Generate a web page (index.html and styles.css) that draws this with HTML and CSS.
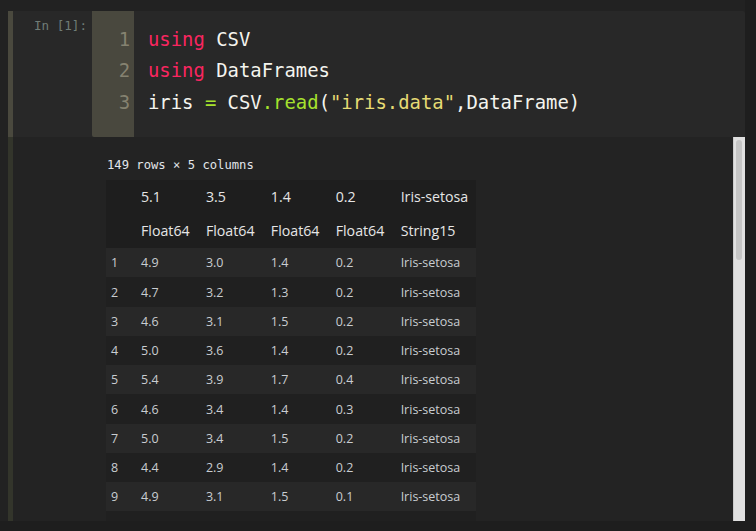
FILE: index.html
```html
<!DOCTYPE html>
<html>
<head>
<meta charset="utf-8">
<link rel="stylesheet" href="styles.css">
</head>
<body>
<div class="notebook">
  <div class="cell">
    <div class="input">
      <div class="prompt">In [1]:</div>
      <div class="gutter"><div>1</div><div>2</div><div>3</div></div>
      <div class="code">
        <div class="line"><span class="kw">using</span> CSV</div>
        <div class="line"><span class="kw">using</span> DataFrames</div>
        <div class="line">iris <span class="op">=</span> CSV<span class="fn">.read</span>(<span class="str">"iris.data"</span>,DataFrame)</div>
      </div>
    </div>
    <div class="output">
      <div class="scroll">
        <div class="result">
          <p class="dims">149 rows × 5 columns</p>
          <table class="df">
            <thead>
              <tr class="names"><th class="idx"></th><th>5.1</th><th>3.5</th><th>1.4</th><th>0.2</th><th>Iris-setosa</th></tr>
              <tr class="types"><th class="idx"></th><th>Float64</th><th>Float64</th><th>Float64</th><th>Float64</th><th>String15</th></tr>
            </thead>
            <tbody>
              <tr><td class="idx">1</td><td>4.9</td><td>3.0</td><td>1.4</td><td>0.2</td><td>Iris-setosa</td></tr>
              <tr><td class="idx">2</td><td>4.7</td><td>3.2</td><td>1.3</td><td>0.2</td><td>Iris-setosa</td></tr>
              <tr><td class="idx">3</td><td>4.6</td><td>3.1</td><td>1.5</td><td>0.2</td><td>Iris-setosa</td></tr>
              <tr><td class="idx">4</td><td>5.0</td><td>3.6</td><td>1.4</td><td>0.2</td><td>Iris-setosa</td></tr>
              <tr><td class="idx">5</td><td>5.4</td><td>3.9</td><td>1.7</td><td>0.4</td><td>Iris-setosa</td></tr>
              <tr><td class="idx">6</td><td>4.6</td><td>3.4</td><td>1.4</td><td>0.3</td><td>Iris-setosa</td></tr>
              <tr><td class="idx">7</td><td>5.0</td><td>3.4</td><td>1.5</td><td>0.2</td><td>Iris-setosa</td></tr>
              <tr><td class="idx">8</td><td>4.4</td><td>2.9</td><td>1.4</td><td>0.2</td><td>Iris-setosa</td></tr>
              <tr><td class="idx">9</td><td>4.9</td><td>3.1</td><td>1.5</td><td>0.1</td><td>Iris-setosa</td></tr>
              <tr><td class="idx">10</td><td>5.4</td><td>3.7</td><td>1.5</td><td>0.2</td><td>Iris-setosa</td></tr>
              <tr><td class="idx">11</td><td>4.8</td><td>3.4</td><td>1.6</td><td>0.2</td><td>Iris-setosa</td></tr>
              <tr><td class="idx">12</td><td>4.8</td><td>3.0</td><td>1.4</td><td>0.1</td><td>Iris-setosa</td></tr>
              <tr><td class="idx">13</td><td>4.3</td><td>3.0</td><td>1.1</td><td>0.1</td><td>Iris-setosa</td></tr>
              <tr><td class="idx">14</td><td>5.8</td><td>4.0</td><td>1.2</td><td>0.2</td><td>Iris-setosa</td></tr>
              <tr><td class="idx">15</td><td>5.7</td><td>4.4</td><td>1.5</td><td>0.4</td><td>Iris-setosa</td></tr>
            </tbody>
          </table>
        </div>
      </div>
      <div class="vscroll"><div class="thumb"></div></div>
    </div>
  </div>
</div>
</body>
</html>
```

FILE: styles.css
```css
html, body {
  margin: 0;
  padding: 0;
  background: #1e1e1e;
  overflow: hidden;
}

.notebook {
  width: 745px;
  height: 521px;
  box-sizing: border-box;
  padding: 11px 0 0 8px;
  background: #222222;
}

.cell {
  display: flex;
  flex-direction: column;
}

.input {
  display: flex;
  height: 126px;
  background: #282828;
  border-left: 5px solid #4a493e;
  border-top-right-radius: 2px;
}

.prompt {
  width: 74px;
  padding: 7px 5px 0 0;
  text-align: right;
  font-family: "DejaVu Sans Mono", monospace;
  font-size: 12.6px;
  line-height: 15px;
  color: #707c76;
}

.gutter {
  width: 38px;
  padding: 12.5px 4px 0 0;
  background: #49483e;
  border-bottom-left-radius: 2px;
  text-align: right;
  font-family: "DejaVu Sans Mono", monospace;
  font-size: 18.9px;
  line-height: 31.6px;
  color: #858270;
}

.code {
  flex: 1;
  padding: 12.5px 14px 0 14px;
  font-family: "DejaVu Sans Mono", monospace;
  font-size: 18.9px;
  line-height: 31.6px;
  color: #f4f4ee;
}

.line {
  white-space: pre;
}

.kw { color: #f92660; }
.op { color: #a6e22e; }
.fn { color: #a6e22e; }
.str { color: #e6db74; }

.output {
  display: flex;
  height: 384px;
  border-left: 5px solid #33352b;
  background: #232323;
}

.scroll {
  flex: 1;
  overflow: hidden;
}

.vscroll {
  width: 9px;
  padding: 3px 0 0 2px;
  background: #e0e0e0;
  border-left: 1px solid #cbcbcb;
}

.thumb {
  width: 6px;
  height: 120px;
  border-radius: 3px;
  background: #c5c5c5;
}

.result {
  padding: 21px 0 10px 93px;
}

.dims {
  margin: 0 0 7px 1px;
  font-family: "DejaVu Sans Mono", monospace;
  font-size: 12.2px;
  line-height: 15px;
  color: #e2e6ea;
}

.df {
  border-collapse: collapse;
  font-family: "Open Sans", sans-serif;
}

.df th {
  padding: 0 10.3px 0 6px;
  text-align: left;
  font-weight: normal;
  font-size: 14.2px;
  color: #e6e6e6;
  background: #1e1e1e;
}

.df tr.names th {
  height: 33.5px;
}

.df tr.types th {
  height: 34.5px;
}

.df td {
  height: 29px;
  padding: 0 10.3px 0 6px;
  font-size: 12.5px;
  color: #c9cdd1;
}

.df tbody tr:nth-child(4n+2) td {
  height: 30px;
}

.df th.idx, .df td.idx {
  width: 22px;
  padding-left: 5px;
  padding-right: 2px;
}

.df th:last-child, .df td:last-child {
  padding-right: 8px;
}

.df tbody tr:nth-child(odd) td {
  background: #282828;
}

.df tbody tr:nth-child(even) td {
  background: #202020;
}
```
